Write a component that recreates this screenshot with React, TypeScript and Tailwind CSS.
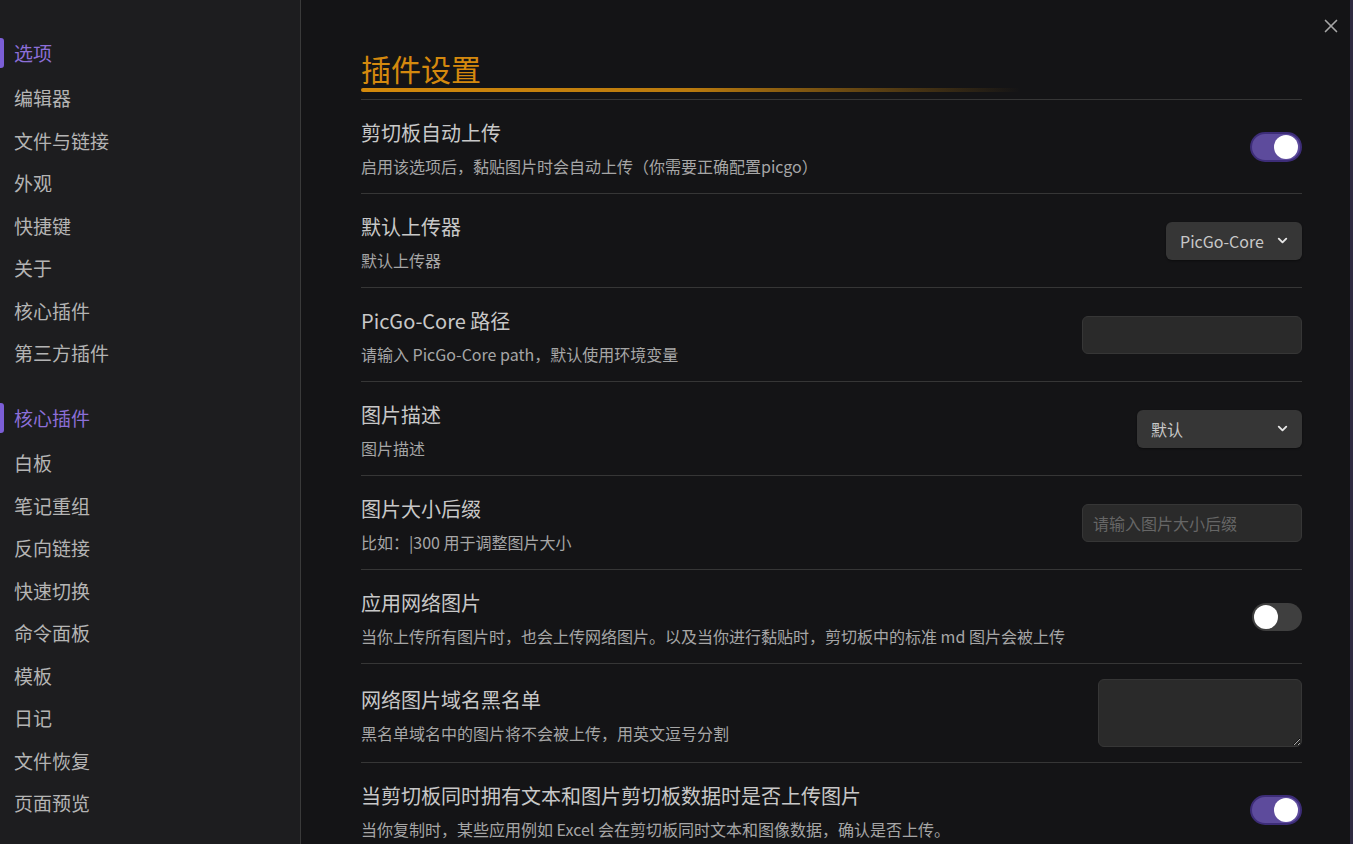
import React from 'react';
import { X, ChevronDown } from 'lucide-react';

const optionItems = ['编辑器', '文件与链接', '外观', '快捷键', '关于', '核心插件', '第三方插件'];
const coreItems = ['白板', '笔记重组', '反向链接', '快速切换', '命令面板', '模板', '日记', '文件恢复', '页面预览'];

type Control =
  | { kind: 'toggle'; on: boolean }
  | { kind: 'select'; value: string; wide?: boolean }
  | { kind: 'input'; placeholder?: string }
  | { kind: 'textarea' };

const settings: { title: string; desc: string; control: Control }[] = [
  { title: '剪切板自动上传', desc: '启用该选项后，黏贴图片时会自动上传（你需要正确配置picgo）', control: { kind: 'toggle', on: true } },
  { title: '默认上传器', desc: '默认上传器', control: { kind: 'select', value: 'PicGo-Core' } },
  { title: 'PicGo-Core 路径', desc: '请输入 PicGo-Core path，默认使用环境变量', control: { kind: 'input' } },
  { title: '图片描述', desc: '图片描述', control: { kind: 'select', value: '默认', wide: true } },
  { title: '图片大小后缀', desc: '比如：|300 用于调整图片大小', control: { kind: 'input', placeholder: '请输入图片大小后缀' } },
  { title: '应用网络图片', desc: '当你上传所有图片时，也会上传网络图片。以及当你进行黏贴时，剪切板中的标准 md 图片会被上传', control: { kind: 'toggle', on: false } },
  { title: '网络图片域名黑名单', desc: '黑名单域名中的图片将不会被上传，用英文逗号分割', control: { kind: 'textarea' } },
  { title: '当剪切板同时拥有文本和图片剪切板数据时是否上传图片', desc: '当你复制时，某些应用例如 Excel 会在剪切板同时文本和图像数据，确认是否上传。', control: { kind: 'toggle', on: true } },
];

function Toggle({ on }: { on: boolean }) {
  return on ? (
    <div className="flex h-[30px] w-[52px] items-center justify-end rounded-full border-2 border-[#3d2d78] bg-[#5d4b9c] pr-[2px]">
      <div className="h-[24px] w-[24px] rounded-full bg-white" />
    </div>
  ) : (
    <div className="flex h-[28px] w-[50px] items-center rounded-full bg-[#3f3f3f] pl-[2px]">
      <div className="h-[24px] w-[24px] rounded-full bg-white" />
    </div>
  );
}

function SettingControl({ control }: { control: Control }) {
  if (control.kind === 'toggle') return <Toggle on={control.on} />;
  if (control.kind === 'select') {
    return (
      <div
        className={
          control.wide
            ? 'flex h-[38px] w-[165px] items-center justify-between rounded-[6px] bg-[#363636] pl-[14px] pr-[12px] text-[16px] text-[#c8c8c8] shadow-[0_1px_2px_rgba(0,0,0,0.4)]'
            : 'flex h-[38px] w-[136px] items-center justify-between rounded-[6px] bg-[#363636] pl-[14px] pr-[12px] text-[16px] text-[#c8c8c8] shadow-[0_1px_2px_rgba(0,0,0,0.4)]'
        }
      >
        <span>{control.value}</span>
        <ChevronDown className="h-[15px] w-[15px] text-[#e6e6e6]" strokeWidth={3} />
      </div>
    );
  }
  if (control.kind === 'input') {
    return (
      <input
        readOnly
        placeholder={control.placeholder}
        className="h-[38px] w-[220px] rounded-[6px] border border-[#363636] bg-[#2a2a2a] px-[10px] text-[16px] text-[#c8c8c8] outline-none placeholder:text-[#666666]"
      />
    );
  }
  return (
    <textarea
      readOnly
      className="block h-[68px] w-[204px] rounded-[6px] border border-[#363636] bg-[#2a2a2a] outline-none [color-scheme:dark]"
    />
  );
}

export default function App() {
  return (
    <div className="flex h-[844px] w-full overflow-hidden bg-[#141416] font-['Noto_Sans_CJK_SC',sans-serif]">
      {/* Sidebar */}
      <aside className="w-[301px] shrink-0 border-r border-[#3a3a3a] bg-[#1d1d1f] pt-[32px]">
        <div className="mb-[3px] flex h-[42px] items-center">
          <div className="h-[30px] w-[4px] rounded-r-[3px] bg-[#7b5ed6]" />
          <span className="ml-[10px] text-[19px] text-[#8c6fd8]">选项</span>
        </div>
        {optionItems.map((item) => (
          <div key={item} className="flex h-[42.5px] items-center pl-[14px] text-[19px] text-[#b4b4b4]">
            {item}
          </div>
        ))}
        <div className="mb-[3px] mt-[22.75px] flex h-[42px] items-center">
          <div className="h-[30px] w-[4px] rounded-r-[3px] bg-[#7b5ed6]" />
          <span className="ml-[10px] text-[19px] text-[#8c6fd8]">核心插件</span>
        </div>
        {coreItems.map((item) => (
          <div key={item} className="flex h-[42.5px] items-center pl-[14px] text-[19px] text-[#b4b4b4]">
            {item}
          </div>
        ))}
      </aside>

      {/* Main */}
      <main className="relative flex-1">
        <button className="absolute right-[8px] top-[15px] text-[#a6a6a6]">
          <X className="h-[22px] w-[22px]" strokeWidth={1.8} />
        </button>
        <div className="ml-[60px] w-[941px] pt-[48px]">
          <div className="border-b border-[#363636] pb-[7px]">
            <h2 className="text-[30px] leading-[40px] text-[#d4890e]">插件设置</h2>
            <div className="h-[4px] w-[70%] rounded-full bg-gradient-to-r from-[#d48a0c] via-[#b97a0e] to-transparent" />
          </div>
          {settings.map((s) => (
            <div key={s.title} className="flex items-center justify-between border-b border-[#363636] py-[15px] last:border-b-0">
              <div>
                <div className="text-[20px] leading-[36px] text-[#c8c8c8]">{s.title}</div>
                <div className="mt-[3px] text-[16px] leading-[24px] text-[#a6a6a6]">{s.desc}</div>
              </div>
              <SettingControl control={s.control} />
            </div>
          ))}
        </div>
      </main>
      <div className="w-[3px] shrink-0 bg-[#2e2a40]" />
    </div>
  );
}
